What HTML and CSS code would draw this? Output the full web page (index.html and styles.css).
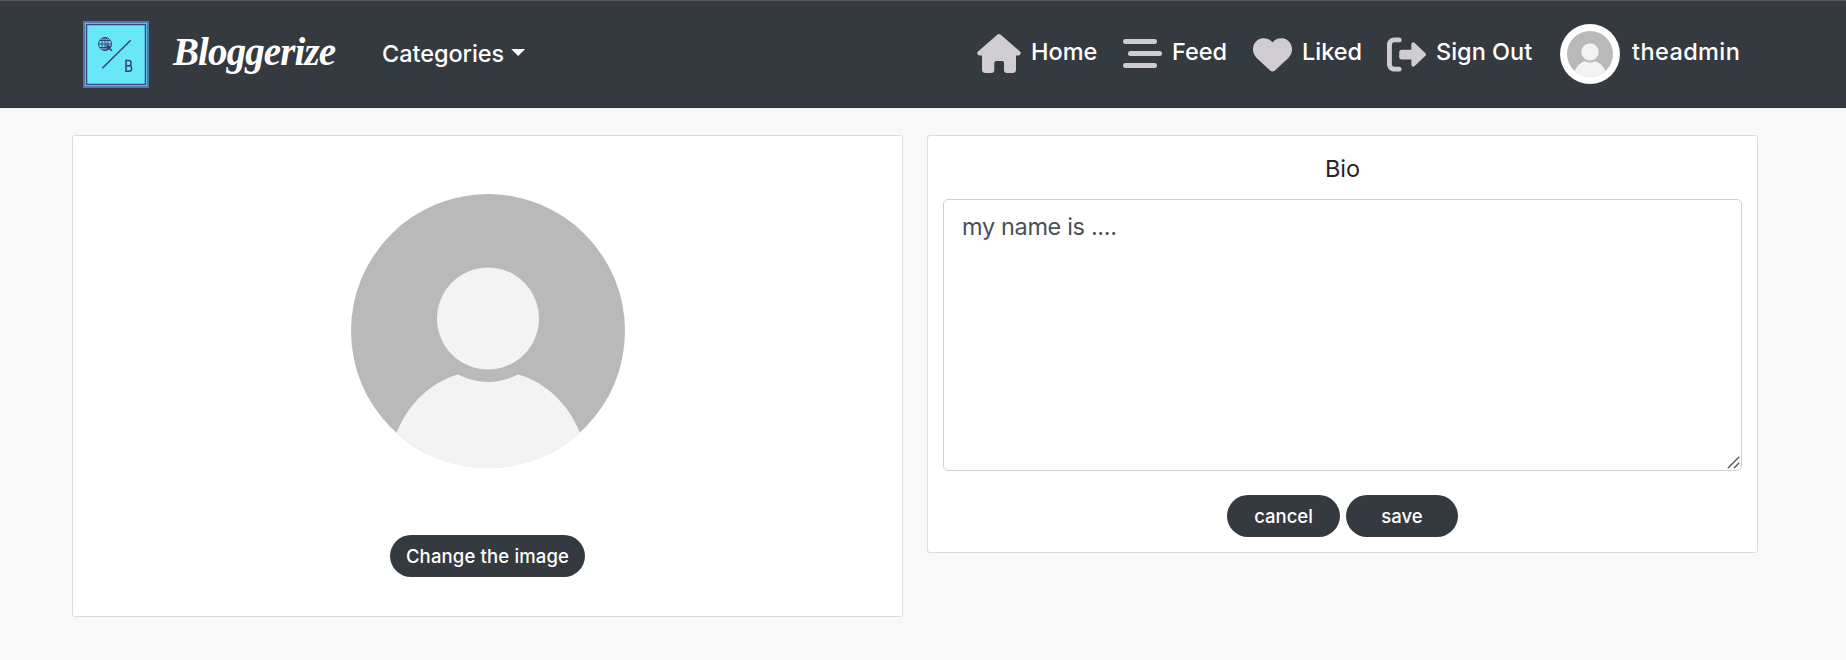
FILE: index.html
```html
<!DOCTYPE html>
<html lang="en">
<head>
<meta charset="utf-8">
<title>Bloggerize</title>
<link rel="stylesheet" href="styles.css">
</head>
<body>
<svg width="0" height="0" class="defs" aria-hidden="true">
  <symbol id="avatar" viewBox="0 0 274 274">
    <circle cx="137" cy="137" r="137" fill="#b9b9b9"/>
    <path d="M45.500 239C57 210 80 188 107 180.500Q137 195.500 167 180.500C195 188 218 211 229 239A137 137 0 0 1 45.500 239Z" fill="#f3f3f3"/>
    <circle cx="137" cy="124.500" r="51" fill="#f3f3f3"/>
  </symbol>
</svg>
<header class="navbar">
  <a class="logo">
    <svg width="66" height="67" viewBox="0 0 66 67" fill="none">
      <path fill="#68e8f7" d="M0 0h66v67H0z"/>
      <path stroke="#4f78ae" stroke-width="2" d="M1 1h64v65H1z"/>
      <path stroke="#3d4482" stroke-width="1.500" d="M3.500 3.500h59v60h-59z"/>
      <g stroke="#3a3f7c" stroke-width="1">
        <circle cx="22" cy="23" r="6.500"/>
        <ellipse cx="22" cy="23" rx="3" ry="6.500"/>
        <path d="M15.500 23h13M22 16.500v13M17 19.500h10M17 26.500h10"/>
        <path stroke-width="1.500" d="M19.300 47.200 47.700 19.200"/>
        <path stroke-width="1.500" d="M43 39.500v10.800h3.300q2.200 0 2.200-2.300v-1.200q0-2-2.200-2H43h3q2 0 2-2v-1.300q0-2-2-2Z"/>
      </g>
      <path fill="#3a3f7c" d="m23 23.500 6 2-2 1.300 2.500 2.500-1.300 1-2.400-2.500-1.300 1.700Z"/>
    </svg>
  </a>
  <a class="brand">Bloggerize</a>
  <a class="categories">Categories<i class="caret"></i></a>
  <nav class="links">
    <a class="home"><svg width="44" height="39" viewBox="0 0 44 39"><path d="M20.500.6q1.500-1.200 3 0L43 17.600q1 1 .7 2.200-.5 1.800-2.300 1.800H39V35.500Q39 39 35.500 39H30q-3 0-3-3v-7q0-2-2-2h-5.700q-2 0-2 2v7q0 3-3 3H8.700Q5 39 5 35.500V21.600H2.600Q.8 21.600.3 19.800 0 18.600 1 17.600Z"/></svg><span>Home</span></a>
    <a class="feed"><svg width="39" height="29" viewBox="0 0 39 29"><rect width="34" height="5" rx="2.500"/><rect x="5" y="12" width="34" height="5" rx="2.500"/><rect y="24" width="34" height="5" rx="2.500"/></svg><span>Feed</span></a>
    <a class="liked"><svg width="39" height="39" viewBox="0 0 512 512"><path d="M0 190.900V185.100C0 115.200 50.520 55.580 119.400 44.100C164.100 36.510 211.400 51.370 244 84.020L256 96L267.100 84.020C300.600 51.370 347 36.510 392.600 44.100C461.500 55.580 512 115.200 512 185.100V190.900C512 232.400 494.800 272.100 464.400 300.400L283.700 469.100C276.200 476.100 266.300 480 256 480C245.700 480 235.800 476.100 228.300 469.100L47.590 300.400C17.230 272.100 0 232.400 0 190.900Z"/></svg><span>Liked</span></a>
    <a class="signout"><svg width="39" height="39" viewBox="0 0 512 512"><path d="M96 480h64C177.700 480 192 465.700 192 448S177.700 416 160 416H96c-17.670 0-32-14.330-32-32V128c0-17.670 14.330-32 32-32h64C177.700 96 192 81.670 192 64S177.700 32 160 32H96C42.980 32 0 74.980 0 128v256C0 437 42.980 480 96 480zM504.800 238.500l-144.100-136c-6.975-6.578-17.200-8.375-26-4.594C325.900 101.800 320 110.400 320 120v72h-128c-17.690 0-32 14.310-32 32v64c0 17.690 14.310 32 32 32h128v72c0 9.578 5.700 18.200 14.500 22c8.803 3.781 19.030 1.984 26-4.594l144.100-136C514.400 264.400 514.400 247.600 504.800 238.500z"/></svg><span>Sign Out</span></a>
    <a class="user"><svg class="thumb" width="60" height="60"><circle cx="30" cy="30" r="30" fill="#fff"/><use href="#avatar" x="7" y="7" width="46" height="46"/></svg><span>theadmin</span></a>
  </nav>
</header>
<main class="columns">
  <section class="card picture">
    <svg width="274" height="274"><use href="#avatar"/></svg>
    <button class="pill change">Change the image</button>
  </section>
  <section class="card bio">
    <h1>Bio</h1>
    <div class="field">
      <textarea spellcheck="false">my name is ....</textarea>
      <svg class="grip" width="13" height="13" viewBox="0 0 13 13" fill="none" stroke="#55565a" stroke-width="1.400"><path d="M.8 12.200 12.200.8M6.800 12.200l5.400-5.400"/></svg>
    </div>
    <div class="actions"><button class="pill cancel">cancel</button><button class="pill save">save</button></div>
  </section>
</main>
</body>
</html>
```
FILE: styles.css
```css
* { box-sizing: border-box; }
body {
  margin: 0;
  height: 660px;
  overflow: hidden;
  background: #f8f8f8;
  font-family: "Inter", "Open Sans", sans-serif;
  font-size: 23.5px;
  color: #212529;
}
.defs { display: block; }
.navbar {
  display: flex;
  align-items: flex-start;
  height: 108px;
  padding-left: 83px;
  background: #353940;
  border-top: 1px solid #555855;
  border-bottom: 1px solid #2f3036;
  color: #fff;
  font-weight: 500;
  white-space: nowrap;
}
.logo { width: 66px; height: 67px; margin-top: 20px; }
.brand {
  width: 209px;
  margin: 24px 0 0 24px;
  font: italic bold 39px/54px "Liberation Serif", serif;
  letter-spacing: -0.9px;
}
.categories {
  display: flex;
  width: 595px;
  margin-top: 37px;
  line-height: 32px;
  letter-spacing: -0.05px;
}
.caret {
  width: 14px;
  height: 7px;
  margin: 11px 0 0 7px;
  background: #fff;
  clip-path: polygon(0 0, 100% 0, 50% 100%);
}
.links { display: flex; height: 106px; }
.links a { display: flex; align-items: flex-start; }
.links svg { flex: none; fill: #cfcdd2; }
.links span { margin: 35px 0 0 10px; line-height: 32px; }
.home { width: 146px; }
.home svg { margin-top: 33px; }
.feed { width: 130px; }
.feed svg { margin-top: 38px; }
.liked { width: 134px; }
.liked svg, .signout svg { margin-top: 34px; }
.signout { width: 173px; }
.links .thumb { margin-top: 23px; }
.links .user span { margin-left: 12px; letter-spacing: 0.4px; }
.columns {
  display: flex;
  align-items: flex-start;
  gap: 24px;
  padding: 27px 0 0 72px;
}
.card {
  width: 831px;
  background: #fff;
  border: 1px solid #dcdcdf;
  border-radius: 3px;
}
.picture {
  display: flex;
  flex-direction: column;
  align-items: center;
  height: 482px;
  padding-top: 58px;
}
.pill {
  height: 42px;
  padding: 0 0 1px;
  border: 0;
  border-radius: 21px;
  background: #353940;
  color: #fff;
  font: 500 18.5px "Inter", sans-serif;
  white-space: nowrap;
}
.change { width: 195px; margin-top: 67px; letter-spacing: 0.15px; }
.bio { height: 418px; padding: 15px; text-align: center; }
.bio h1 {
  margin: 0 0 12px;
  height: 36px;
  font-size: 23.5px;
  font-weight: 400;
  line-height: 36px;
}
.field { position: relative; }
.field textarea {
  display: block;
  width: 799px;
  height: 272px;
  padding: 9px 18px;
  border: 1px solid #ced0d8;
  border-radius: 5px;
  background: #fff;
  color: #495057;
  font: 400 23.5px/36px "Inter", sans-serif;
  letter-spacing: -0.35px;
  outline: 0;
  resize: none;
}
.grip { position: absolute; right: 2px; bottom: 2px; }
.actions { display: flex; justify-content: center; gap: 6px; margin-top: 24px; }
.cancel { width: 113px; }
.save { width: 112px; }
```
